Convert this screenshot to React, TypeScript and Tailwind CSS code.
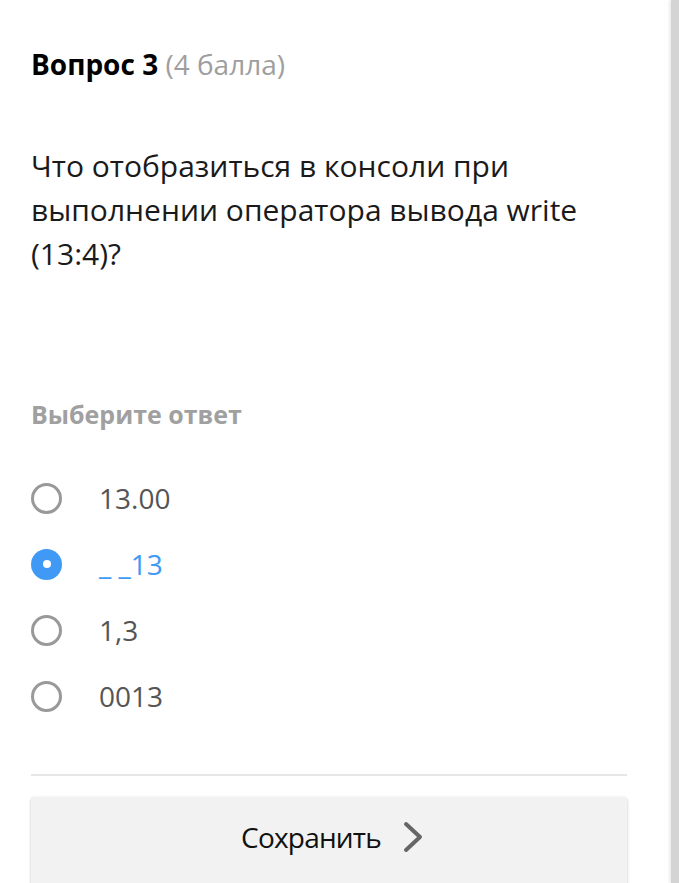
const options = ["13.00", "_ _13", "1,3", "0013"];
const selected = 1;

export default function App() {
  return (
    <div className="flex h-[883px] w-[679px] overflow-hidden bg-white font-['Open_Sans',sans-serif]">
      <div className="w-[671px] shrink-0 pl-[31px] pr-[44px]">
        <h2 className="mt-[44px] text-[28px] leading-[40px] text-black">
          <span className="font-bold">Вопрос 3</span>{" "}
          <span className="text-[#9e9e9e]">(4 балла)</span>
        </h2>

        <p className="mt-[60px] text-[30px] leading-[44px] text-[#1a1a1a]">
          Что отобразиться в консоли при выполнении оператора вывода write
          (13:4)?
        </p>

        <div className="mt-[121px] text-[25px] font-bold leading-[34px] text-[#a0a0a0]">
          Выберите ответ
        </div>

        <ul className="mt-[52px] flex flex-col gap-[36px]">
          {options.map((opt, i) => {
            const active = i === selected;
            return (
              <li key={opt} className="flex h-[30px] items-center">
                {active ? (
                  <span className="flex size-[31px] items-center justify-center rounded-full bg-[#3f99f5]">
                    <span className="size-[8px] rounded-full bg-white" />
                  </span>
                ) : (
                  <span className="size-[31px] rounded-full border-[3px] border-[#999999]" />
                )}
                <span
                  className={
                    "ml-[37px] text-[28px] leading-[30px] " +
                    (active ? "text-[#3f99f5]" : "text-[#555555]")
                  }
                >
                  {opt}
                </span>
              </li>
            );
          })}
        </ul>

        <div className="mt-[63px] h-[2px] bg-[#e6e6e6]" />

        <button className="mt-[21px] flex h-[100px] w-full items-start justify-center rounded-[4px] bg-[#f2f2f2] pl-[6px] pt-[20px] shadow-[0_1px_3px_rgba(0,0,0,0.25)]">
          <span className="text-[28px] leading-[40px] tracking-[-0.8px] text-[#111111]">
            Сохранить
          </span>
          <svg
            className="ml-[22px] mt-[4px]"
            width="20"
            height="32"
            viewBox="0 0 20 32"
            fill="none"
            stroke="#666666"
            strokeWidth="4"
            strokeLinecap="round"
            strokeLinejoin="round"
          >
            <polyline points="3,3 17,16 3,29" />
          </svg>
        </button>
      </div>
      <div className="w-[8px] shrink-0 bg-[#d4d4d4] shadow-[-2px_0_3px_rgba(0,0,0,0.08)]" />
    </div>
  );
}
